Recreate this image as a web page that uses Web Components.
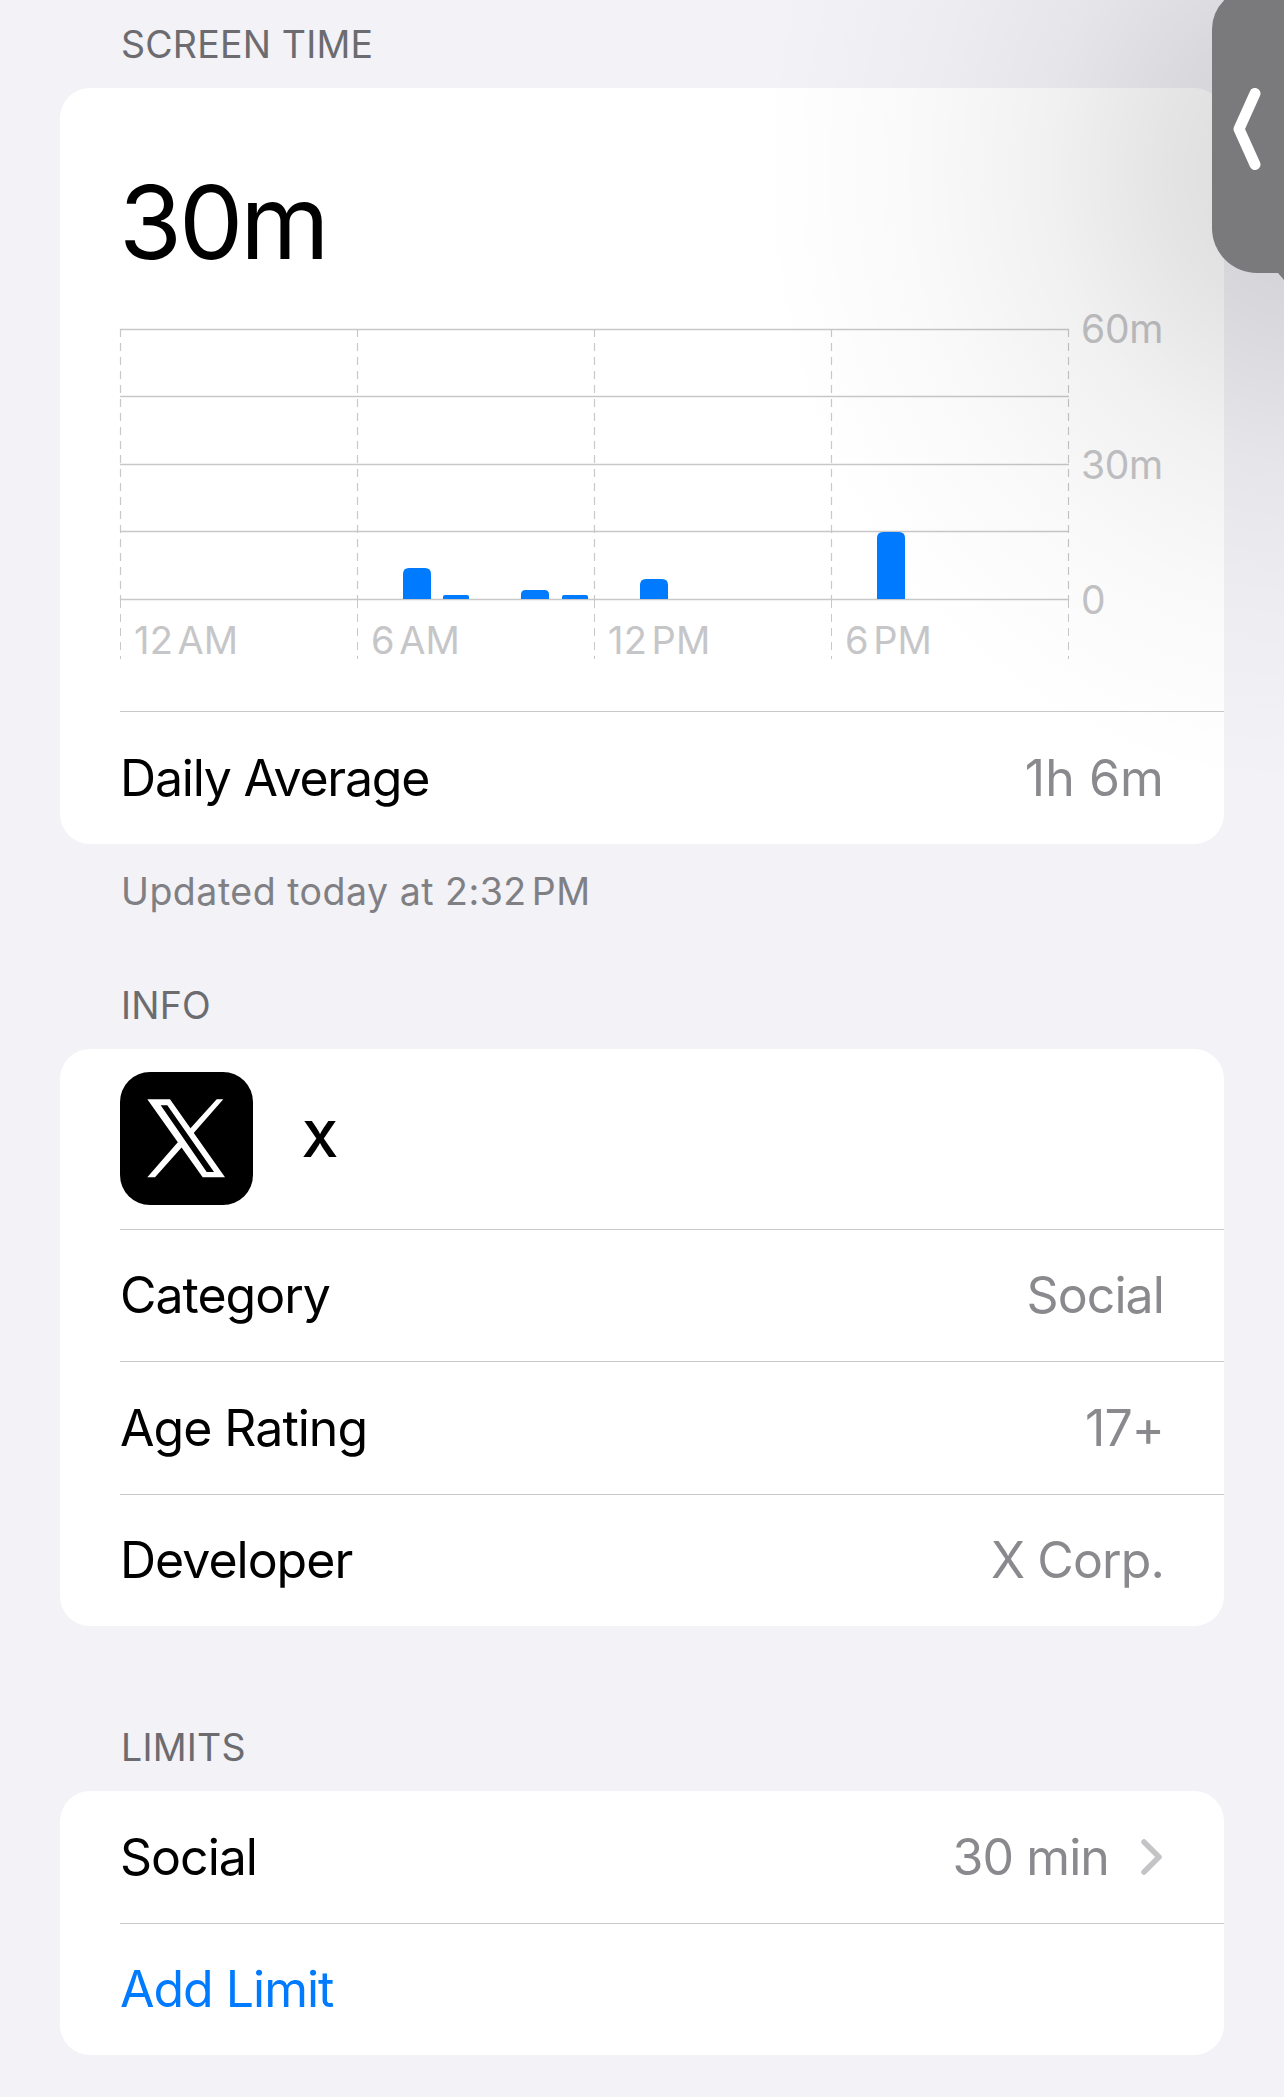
<!DOCTYPE html>
<html lang="en">
<head>
<meta charset="utf-8">
<title>Screen Time</title>
<style>
  html, body { margin: 0; padding: 0; background: #f2f2f7; }
  body { font-family: Inter, "Liberation Sans", sans-serif; width: 1284px; height: 2097px; overflow: hidden; position: relative; }
</style>
</head>
<body>
<st-screen>
  <st-section label="SCREEN TIME" footer="Updated today at 2:32&lt;span class=&quot;nb&quot;&gt; &lt;/span&gt;PM" style="--top:25px">
    <st-usage total="30m">
      <st-row label="Daily Average" value="1h 6m" style="--val-ls:.1px;--lab-ls:-1.2px"></st-row>
    </st-usage>
  </st-section>
  <st-section label="INFO" style="--top:72px">
    <st-app name="X"></st-app>
    <st-row divider label="Category" value="Social"></st-row>
    <st-row divider label="Age Rating" value="17+"></st-row>
    <st-row divider label="Developer" value="X Corp."></st-row>
  </st-section>
  <st-section label="LIMITS" style="--top:102px">
    <st-row label="Social" value="30 min" chevron></st-row>
    <st-row divider label="Add Limit" accent></st-row>
  </st-section>
</st-screen>
<st-shade></st-shade>
<st-handle></st-handle>

<script>
(function () {
  // Small helper: one shadow root per element, markup set from the class.
  function base(html) {
    return class extends HTMLElement {
      connectedCallback() {
        if (this.shadowRoot) return;
        this.attachShadow({ mode: 'open' }).innerHTML = typeof html === 'function' ? html(this) : html;
      }
    };
  }

  customElements.define('st-screen', base(
    '<style>:host{display:block;padding:0 60px}</style><slot></slot>'));

  customElements.define('st-section', base(function (el) {
    var footer = el.getAttribute('footer');
    return '<style>'
      + ':host{display:block;padding-top:var(--top,0)}'
      + '.head{font-size:37.5px;line-height:40px;color:#6c6c70;padding:0 0 23px 61px;letter-spacing:.2px}'
      + '.card{background:#fff;border-radius:30px;overflow:hidden}'
      + '.foot{font-size:37.5px;line-height:44px;color:#808084;padding:26px 0 0 61px;letter-spacing:.5px}'
      + '.nb{word-spacing:-6px}'
      + '</style>'
      + '<div class="head">' + el.getAttribute('label') + '</div>'
      + '<div class="card"><slot></slot></div>'
      + (footer ? '<div class="foot">' + footer + '</div>' : '');
  }));

  customElements.define('st-row', base(function (el) {
    var value = el.getAttribute('value');
    var chev = el.hasAttribute('chevron')
      ? '<svg width="21" height="36" viewBox="0 0 21 36"><path d="M3 3l15 15L3 33" fill="none" stroke="#c4c4c7" stroke-width="5.5" stroke-linecap="round" stroke-linejoin="round"/></svg>'
      : '';
    return '<style>'
      + ':host{display:block;padding-left:60px}'
      + '.row{display:flex;align-items:center;justify-content:space-between;height:131.5px;padding-right:60px;font-size:50px;letter-spacing:var(--lab-ls,-1px);color:#000}'
      + ':host([divider]) .row{border-top:1.5px solid #c8c8ca}'
      + ':host([accent]) .label{color:#007aff}'
      + '.val{display:flex;align-items:center;gap:32px;color:#8a8a8e;letter-spacing:var(--val-ls,-.9px)}'
      + 'svg{margin-right:2px}'
      + '</style>'
      + '<div class="row"><span class="label">' + el.getAttribute('label') + '</span>'
      + (value ? '<span class="val"><span>' + value + '</span>' + chev + '</span>' : '')
      + '</div>';
  }));

  customElements.define('st-app', base(function (el) {
    return '<style>'
      + ':host{display:block;padding-left:60px}'
      + '.row{display:flex;align-items:center;gap:49px;height:180px;font-size:50px;font-weight:600;color:#000}'
      + 'svg{display:block}'
      + '</style>'
      + '<div class="row">'
      + '<svg width="133" height="133" viewBox="0 0 133 133">'
      + '<rect width="133" height="133" rx="30" fill="#000"/>'
      + '<path fill="#fff" fill-rule="evenodd" d="M27.3 27.3H50L105 105.3H82.7ZM40.7 33.3H47.3L94 100H86.7Z"/>'
      + '<path fill="#fff" d="M103.3 27.3H96.7L68 59L71.5 63.5ZM27.3 105.3H35L62 75L58 70Z"/>'
      + '</svg><span>' + el.getAttribute('name') + '</span></div>';
  }));

  // Chart: gridlines and bars live in an svg, labels stay real text.
  var BARS = [[403, 568, 28], [443, 595, 26], [521, 590, 28], [562, 595, 26], [640, 579, 28], [877, 532, 28]];
  var X0 = 120, Y0 = 329, XS = [120, 357, 594, 831, 1068], YS = [329, 396, 464, 531, 599];

  customElements.define('st-chart', base(function () {
    var s = '';
    YS.forEach(function (y) {
      s += '<line x1="0" x2="949" y1="' + (y - Y0 + .5) + '" y2="' + (y - Y0 + .5) + '" stroke="#c8c8ca" stroke-width="1.3"/>';
    });
    XS.forEach(function (x) {
      s += '<line x1="' + (x - X0 + .5) + '" x2="' + (x - X0 + .5) + '" y1="0" y2="271" stroke="#c8c8ca" stroke-width="1.2" stroke-dasharray="8 6"/>';
    });
    BARS.forEach(function (b) {
      var h = 599 - b[1], r = Math.min(6, h / 2);
      s += '<path fill="#007aff" d="M' + (b[0] - X0) + ' ' + (h + b[1] - Y0) + 'v' + (-(h - r)) + 'q0 ' + (-r) + ' ' + r + ' ' + (-r) + 'h' + (b[2] - 2 * r) + 'q' + r + ' 0 ' + r + ' ' + r + 'v' + (h - r) + 'z"/>';
    });
    return '<style>'
      + ':host{display:block}'
      + '.wrap{display:grid;grid-template-columns:950px auto;column-gap:11px}'
      + 'svg{display:block}'
      + '.x{display:grid;grid-template-columns:237px 237px 237px 238px;height:59px;width:949px}'
      + '.x span{padding:21px 0 0 14px;font-size:38px;line-height:38px;color:#c6c6c8;word-spacing:-6.5px;letter-spacing:.2px;'
      + 'background:repeating-linear-gradient(to bottom,#c8c8ca 0 8px,transparent 8px 14px) left top/1.2px 100% no-repeat}'
      + '.x span:last-child{background:repeating-linear-gradient(to bottom,#c8c8ca 0 8px,transparent 8px 14px) left top/1.2px 100% no-repeat,repeating-linear-gradient(to bottom,#c8c8ca 0 8px,transparent 8px 14px) right top/1.2px 100% no-repeat}'
      + '.y{display:flex;flex-direction:column;justify-content:space-between;height:271px;font-size:39px;line-height:0;color:#c4c4c6;letter-spacing:-.3px}'
      + '.y span{height:0}'
      + '</style>'
      + '<div class="wrap"><svg width="950" height="271" viewBox="0 0 950 271" overflow="visible">' + s + '</svg>'
      + '<div class="y"><span>60m</span><span>30m</span><span>0</span></div>'
      + '<div class="x"><span>12 AM</span><span>6 AM</span><span>12 PM</span><span>6 PM</span></div>'
      + '</div>';
  }));

  customElements.define('st-usage', base(function (el) {
    return '<style>'
      + ':host{display:block}'
      + '.top{padding:0 0 0 60px}'
      + '.total{font-size:102px;line-height:120px;height:241px;box-sizing:border-box;padding-top:74px;margin-left:-1px;color:#000;letter-spacing:-3px}'
      + '.gap{height:52px}'
      + '.sep{margin-left:60px;border-top:1.5px solid #c8c8ca}'
      + '</style>'
      + '<div class="top"><div class="total">' + el.getAttribute('total') + '</div><st-chart></st-chart></div>'
      + '<div class="gap"></div><div class="sep"></div><slot></slot>';
  }));

  // Soft shadow thrown by the side handle, sits over the page.
  customElements.define('st-shade', base(
    '<style>:host{position:absolute;inset:0;pointer-events:none;'
    + 'background:radial-gradient(ellipse 540px 620px at 1300px 170px,rgba(0,0,0,.15) 0%,rgba(0,0,0,.105) 25%,rgba(0,0,0,.055) 47%,rgba(0,0,0,.025) 70%,rgba(0,0,0,0) 100%)}</style>'));

  customElements.define('st-handle', base(
    '<style>:host{position:absolute;left:1212px;top:-11px;width:72px;height:284px;background:#7a7a7c;border-radius:40px 0 0 45px;display:flex;align-items:center;padding:0 0 4px 21px;box-sizing:border-box}'
    + ':host::after{content:"";position:absolute;right:0;top:100%;width:6px;height:7px;background:#7a7a7c;clip-path:polygon(0 0,100% 0,100% 100%)}'
    + 'svg{display:block}</style>'
    + '<svg width="28" height="82" viewBox="0 0 28 82"><path d="M22 5.5L6 41L22 76.5" fill="none" stroke="#fff" stroke-width="11" stroke-linecap="round" stroke-linejoin="round"/></svg>'));
})();
</script>
</body>
</html>
